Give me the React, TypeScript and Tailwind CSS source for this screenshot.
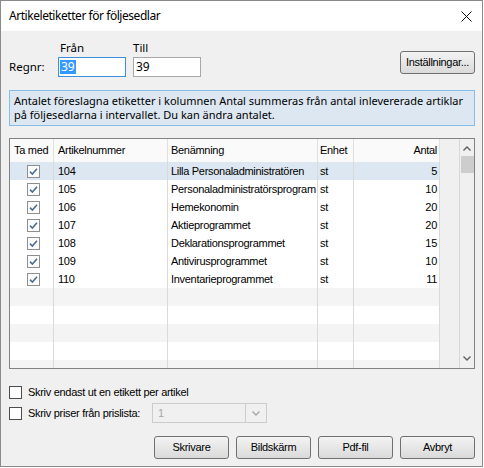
import React from "react";

type Row = { nr: string; name: string; unit: string; qty: number };

const rows: Row[] = [
  { nr: "104", name: "Lilla Personaladministratören", unit: "st", qty: 5 },
  { nr: "105", name: "Personaladministratörsprogram", unit: "st", qty: 10 },
  { nr: "106", name: "Hemekonomin", unit: "st", qty: 20 },
  { nr: "107", name: "Aktieprogrammet", unit: "st", qty: 20 },
  { nr: "108", name: "Deklarationsprogrammet", unit: "st", qty: 15 },
  { nr: "109", name: "Antivirusprogrammet", unit: "st", qty: 10 },
  { nr: "110", name: "Inventarieprogrammet", unit: "st", qty: 11 },
];

const sans = "font-['Liberation_Sans',Arial,sans-serif] text-[11px] tracking-[-0.3px]";
const segoe = "font-['Noto_Sans',sans-serif]";

function GridCheck() {
  return (
    <svg width="13" height="13" viewBox="0 0 13 13" className="block">
      <rect x="0.5" y="0.5" width="12" height="12" fill="#fdfdfd" stroke="#8f8f8f" />
      <path d="M3 6.6 L5.4 9 L10 3.8" fill="none" stroke="#4a6f96" strokeWidth="1.6" />
    </svg>
  );
}

function Button({ label, className = "" }: { label: string; className?: string }) {
  return (
    <button
      className={`h-[23px] w-[75px] rounded-[3px] border border-[#707070] bg-linear-to-b from-[#f3f3f3] to-[#dadada] text-black ${sans} ${className}`}
    >
      {label}
    </button>
  );
}

function Chevron({ up }: { up?: boolean }) {
  return (
    <svg width="8" height="5" viewBox="0 0 8 5" className="block">
      <path
        d={up ? "M0.5 4.5 L4 1 L7.5 4.5" : "M0.5 0.5 L4 4 L7.5 0.5"}
        fill="none"
        stroke="#606060"
        strokeWidth="1.4"
      />
    </svg>
  );
}

export default function App() {
  return (
    <div className="h-[468px] w-[484px] bg-white">
      <div className="flex h-[467px] w-[483px] flex-col border border-[#8a8a8a] bg-[#f0f0f0]">
        {/* title bar */}
        <div className="flex h-[30px] items-center justify-between bg-white pl-[8px] pr-[10px]">
          <span className={`${segoe} text-[12px] tracking-[-0.45px] text-black`}>
            Artikeletiketter för följesedlar
          </span>
          <svg width="11" height="11" viewBox="0 0 11 11">
            <path d="M0.5 0.5 L10.5 10.5 M10.5 0.5 L0.5 10.5" stroke="#111" strokeWidth="1" />
          </svg>
        </div>

        <div className="flex flex-1 flex-col pl-[8px] pr-[7px]">
          {/* range inputs */}
          <div className="flex pt-[10px]">
            <div className="flex flex-col">
              <div className={`flex h-[14px] items-center ${segoe} text-[11.5px] text-black`}>
                <span className="ml-[51px] w-[73px]">Från</span>
                <span>Till</span>
              </div>
              <div className="mt-[2px] flex h-[20px] items-center">
                <span className={`w-[49px] ${segoe} text-[11.5px] text-black`}>Regnr:</span>
                <div className="flex h-[20px] w-[68px] items-center border border-[#3c8fdc] bg-white pl-[1px]">
                  <span className={`${segoe} bg-[#3399ff] px-[1px] text-[12px] leading-[14px] text-white`}>39</span>
                </div>
                <div className="ml-[7px] flex h-[20px] w-[68px] items-center border border-[#a8a8a8] bg-white pl-[2px]">
                  <span className={`${segoe} text-[12px] text-black`}>39</span>
                </div>
              </div>
            </div>
            <Button label="Inställningar..." className="ml-auto mt-[10px]" />
          </div>

          {/* info */}
          <div className="mt-[13px] h-[36px] border border-[#86bde8] bg-[#dce7f1] pl-[4px] pt-[3px]">
            <p className={`${segoe} text-[11px] leading-[14px] text-black`}>
              Antalet föreslagna etiketter i kolumnen Antal summeras från antal inlevererade artiklar
              <br />
              på följesedlarna i intervallet. Du kan ändra antalet.
            </p>
          </div>

          {/* grid */}
          <div className={`mt-[12px] flex h-[231px] border border-[#828282] bg-white ${sans} text-black`}>
            <div className="flex w-[430px] flex-col">
              <div className="flex h-[23px] bg-[#fafafa]">
                <div className="flex w-[44px] items-center border-r border-[#e0e0e0] pl-[4px]">Ta med</div>
                <div className="flex w-[114px] items-center border-r border-[#e0e0e0] pl-[4px]">Artikelnummer</div>
                <div className="flex w-[150px] items-center border-r border-[#e0e0e0] pl-[3px]">Benämning</div>
                <div className="flex w-[36px] items-center border-r border-[#e0e0e0] pl-[2px]">Enhet</div>
                <div className="flex w-[86px] items-center justify-end border-r border-[#e0e0e0] pr-[2px]">Antal</div>
              </div>
              {rows.map((r, i) => (
                <div key={r.nr} className={`flex h-[18px] ${i === 0 ? "bg-[#dde7f1]" : "bg-white"}`}>
                  <div className="flex w-[44px] items-center border-r border-[#dadada] pl-[17px]">
                    <GridCheck />
                  </div>
                  <div className="flex w-[114px] items-center border-r border-[#dadada] pl-[4px]">{r.nr}</div>
                  <div className="flex w-[150px] items-center overflow-hidden whitespace-nowrap border-r border-[#dadada] pl-[3px]">
                    {r.name}
                  </div>
                  <div className="flex w-[36px] items-center border-r border-[#dadada] pl-[2px]">{r.unit}</div>
                  <div className="flex w-[86px] items-center justify-end border-r border-[#dadada] pr-[2px]">{r.qty}</div>
                </div>
              ))}
              {[0, 1, 2, 3, 4].map((i) => (
                <div
                  key={i}
                  className={`flex shrink-0 ${i === 4 ? "h-[8px]" : "h-[18px]"} ${i % 2 === 0 ? "bg-[#f4f4f4]" : "bg-white"}`}
                >
                  <div className="w-[44px] border-r border-[#dadada]" />
                  <div className="w-[114px] border-r border-[#dadada]" />
                  <div className="w-[150px] border-r border-[#dadada]" />
                  <div className="w-[36px] border-r border-[#dadada]" />
                  <div className="w-[86px] border-r border-[#dadada]" />
                </div>
              ))}
            </div>
            <div className="w-[20px] border-r border-[#d8d8d8] bg-[#f0f0f0]" />
            <div className="flex w-[14px] flex-col items-center bg-[#f0f0f0]">
              <div className="flex h-[17px] items-center justify-center pt-[1px]">
                <Chevron up />
              </div>
              <div className="h-[17px] w-[13px] bg-[#cdcdcd]" />
              <div className="flex-1" />
              <div className="flex h-[17px] items-center justify-center pb-[2px]">
                <Chevron />
              </div>
            </div>
          </div>

          {/* options */}
          <div className={`mt-[17px] flex h-[13px] items-center ${sans} tracking-[-0.2px] text-black`}>
            <div className="h-[13px] w-[13px] border border-[#4d4d4d] bg-white" />
            <span className="ml-[6px]">Skriv endast ut en etikett per artikel</span>
          </div>
          <div className={`mt-[4px] flex h-[20px] items-center ${sans} tracking-[-0.2px] text-black`}>
            <div className="h-[13px] w-[13px] border border-[#4d4d4d] bg-white" />
            <span className="ml-[6px] w-[124px]">Skriv priser från prislista:</span>
            <div className="flex h-[20px] w-[115px] items-center border border-[#cccccc] bg-[#f0f0f0]">
              <span className="flex-1 pl-[5px] text-[#a6a6a6]">1</span>
              <div className="flex h-full w-[21px] items-center justify-center border-l border-[#cccccc]">
                <svg width="8" height="5" viewBox="0 0 8 5" className="block">
                  <path d="M0.5 0.5 L4 4 L7.5 0.5" fill="none" stroke="#a9a9a9" strokeWidth="1.5" />
                </svg>
              </div>
            </div>
          </div>

          {/* buttons */}
          <div className="mt-[13px] flex justify-end gap-[7px]">
            <Button label="Skrivare" />
            <Button label="Bildskärm" />
            <Button label="Pdf-fil" />
            <Button label="Avbryt" />
          </div>
        </div>
      </div>
    </div>
  );
}
